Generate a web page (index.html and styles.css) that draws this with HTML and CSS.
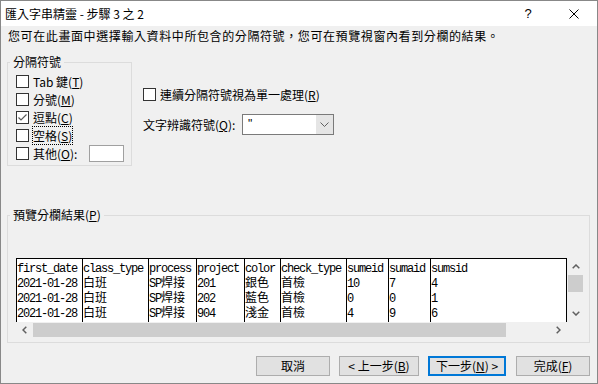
FILE: index.html
```html
<!DOCTYPE html>
<html lang="zh-Hant">
<head>
    <meta charset="UTF-8">
    <title>匯入字串精靈 - 步驟 3 之 2</title>
    <link rel="stylesheet" href="styles.css">
</head>
<body>
<div class="window">
    <div class="titlebar">
        <span class="title">匯入字串精靈 - 步驟 3 之 2</span>
        <span class="tb-btn help">?</span>
        <span class="tb-btn close">
            <svg width="10" height="10" viewBox="0 0 10 10"><path d="M0.5 0.5L9.5 9.5M9.5 0.5L0.5 9.5" stroke="#000" stroke-width="1" fill="none"/></svg>
        </span>
    </div>
    <div class="content">
        <p class="intro">您可在此畫面中選擇輸入資料中所包含的分隔符號，您可在預覽視窗內看到分欄的結果。</p>

        <div class="options">
            <fieldset class="group delims">
                <legend>分隔符號</legend>
                <div class="rows">
                    <div class="check"><span class="box"></span><span>Tab 鍵(<u>T</u>)</span></div>
                    <div class="check"><span class="box"></span><span>分號(<u>M</u>)</span></div>
                    <div class="check"><span class="box"><svg width="11" height="11" viewBox="0 0 11 11"><path d="M1.5 5.5L4 8L9.5 2.5" stroke="#5a5a5a" stroke-width="1.2" fill="none"/></svg></span><span>逗點(<u>C</u>)</span></div>
                    <div class="check"><span class="box"></span><span class="focus">空格(<u>S</u>)</span></div>
                    <div class="check"><span class="box"></span><span>其他(<u>O</u>):</span><span class="other"></span></div>
                </div>
            </fieldset>

            <div class="side">
                <div class="check"><span class="box"></span><span>連續分隔符號視為單一處理(<u>R</u>)</span></div>
                <div class="qualifier">
                    <span class="q-label">文字辨識符號(<u>Q</u>):</span>
                    <div class="combo">
                        <span class="combo-text">"</span>
                        <span class="combo-btn"><svg width="9" height="5" viewBox="0 0 9 5"><path d="M0.5 0.5L4.5 4.5L8.5 0.5" stroke="#606060" stroke-width="1" fill="none"/></svg></span>
                    </div>
                </div>
            </div>
        </div>

        <fieldset class="group preview">
            <legend>預覽分欄結果(<u>P</u>)</legend>
            <div class="preview-body">
                <div class="scroller">
                    <div class="view">
                        <div class="col c10">
                            <div>first_date</div><div>2021-01-28</div><div>2021-01-28</div><div>2021-01-28</div>
                        </div>
                        <div class="col c10">
                            <div>class_type</div><div class="w">白班</div><div class="w">白班</div><div class="w">白班</div>
                        </div>
                        <div class="col c7">
                            <div>process</div><div>SP<span class="w">焊接</span></div><div>SP<span class="w">焊接</span></div><div>SP<span class="w">焊接</span></div>
                        </div>
                        <div class="col c7">
                            <div>project</div><div>201</div><div>202</div><div>904</div>
                        </div>
                        <div class="col c5">
                            <div>color</div><div class="w">銀色</div><div class="w">藍色</div><div class="w">淺金</div>
                        </div>
                        <div class="col c10">
                            <div>check_type</div><div class="w">首檢</div><div class="w">首檢</div><div class="w">首檢</div>
                        </div>
                        <div class="col c6">
                            <div>sumeid</div><div>10</div><div>0</div><div>4</div>
                        </div>
                        <div class="col c6">
                            <div>sumaid</div><div>7</div><div>0</div><div>9</div>
                        </div>
                        <div class="col last">
                            <div>sumsid</div><div>4</div><div>1</div><div>6</div>
                        </div>
                    </div>
                    <div class="vscroll">
                        <span class="arrow"><svg width="8" height="5" viewBox="0 0 8 5"><path d="M0.7 4.3L4 1L7.3 4.3" stroke="#606060" stroke-width="1.5" fill="none"/></svg></span>
                        <span class="vthumb"></span>
                        <span class="spacer"></span>
                        <span class="arrow"><svg width="8" height="5" viewBox="0 0 8 5"><path d="M0.7 0.7L4 4L7.3 0.7" stroke="#606060" stroke-width="1.5" fill="none"/></svg></span>
                    </div>
                    <div class="hscroll">
                        <span class="arrow"><svg width="5" height="8" viewBox="0 0 5 8"><path d="M4.3 0.7L1 4L4.3 7.3" stroke="#606060" stroke-width="1.5" fill="none"/></svg></span>
                        <span class="hthumb"></span>
                        <span class="spacer"></span>
                        <span class="arrow"><svg width="5" height="8" viewBox="0 0 5 8"><path d="M0.7 0.7L4 4L0.7 7.3" stroke="#606060" stroke-width="1.5" fill="none"/></svg></span>
                    </div>
                    <div class="corner"></div>
                </div>
            </div>
        </fieldset>

        <div class="buttons">
            <button class="btn b-cancel">取消</button>
            <button class="btn b-back">&lt; 上一步(<u>B</u>)</button>
            <button class="btn b-next default">下一步(<u>N</u>) &gt;</button>
            <button class="btn b-finish">完成(<u>F</u>)</button>
        </div>
    </div>
</div>
</body>
</html>
```

FILE: styles.css
```css
*{
    margin: 0;
    padding: 0;
    box-sizing: border-box;
}
body{
    background: #fff;
    font-family: "Noto Sans CJK TC", "Liberation Sans", sans-serif;
    font-size: 12px;
    color: #000;
}
u{
    text-decoration: underline;
}
.window{
    width: 598px;
    height: 384px;
    border: 1px solid #888;
    background: #f0f0f0;
    display: flex;
    flex-direction: column;
}

/* title bar */
.titlebar{
    height: 25px;
    background: #fff;
    display: flex;
    align-items: center;
    padding-left: 4px;
}
.title{
    flex: 1;
    line-height: 16px;
}
.tb-btn{
    width: 46px;
    height: 25px;
    display: flex;
    align-items: center;
    justify-content: center;
}
.help{
    font-family: "Liberation Sans", sans-serif;
    font-size: 13px;
}

.content{
    flex: 1;
    padding: 2px 7px 0 6px;
    display: flex;
    flex-direction: column;
}
.intro{
    line-height: 16px;
    padding-left: 1px;
    letter-spacing: 0.6px;
}

/* group boxes */
.group{
    border: 1px solid #dcdcdc;
    min-inline-size: 0;
}
.group legend{
    margin-left: 2px;
    padding: 0 3px;
    line-height: 14px;
}

.options{
    display: flex;
    align-items: flex-start;
    margin-top: 11px;
}
.delims{
    width: 125px;
    height: 111px;
}
.rows{
    padding: 3px 0 0 8px;
}
.check{
    display: flex;
    align-items: center;
    height: 18px;
    gap: 4px;
}
.box{
    width: 13px;
    height: 13px;
    border: 1px solid #333;
    background: #fff;
    display: flex;
    align-items: center;
    justify-content: center;
}
.focus{
    outline: 1px dotted #000;
    outline-offset: 0;
}
.other{
    width: 35px;
    height: 17px;
    margin-left: auto;
    margin-right: 7px;
    background: #fff;
    border: 1px solid #a0a0a0;
}

.side{
    margin-left: 11px;
    padding-top: 30px;
}
.qualifier{
    display: flex;
    align-items: center;
    height: 21px;
    margin-top: 11px;
}
.q-label{
    width: 99px;
}
.combo{
    width: 92px;
    height: 21px;
    border: 1px solid #7a7a7a;
    background: #fff;
    display: flex;
}
.combo-text{
    flex: 1;
    padding-left: 5px;
    line-height: 18px;
    font-family: "Liberation Sans", sans-serif;
}
.combo-btn{
    width: 17px;
    background: #e5e5e5;
    display: flex;
    align-items: center;
    justify-content: center;
}

/* preview */
.preview{
    margin-top: 42px;
    height: 135px;
}
.preview-body{
    padding: 36px 5px 0 8px;
}
.scroller{
    display: grid;
    grid-template-columns: 1fr 17px;
    grid-template-rows: 64px 16px;
}
.view{
    background: #fff;
    border-top: 1px solid #000;
    display: flex;
    overflow: hidden;
    font-family: "Liberation Mono", "Noto Sans CJK TC", monospace;
    font-size: 12px;
    letter-spacing: -1.2px;
}
.col{
    border-left: 1px solid #000;
    padding-top: 3px;
    white-space: nowrap;
}
.col div{
    height: 15px;
    line-height: 15px;
}
.col .w, .col span.w{
    font-size: 12px;
    letter-spacing: 0;
}
.c10{ width: 66px; }
.c7{ width: 48px; }
.c6{ width: 42px; }
.c5{ width: 36px; }
.last{
    flex: 1;
    border-right: 1px solid #000;
}

.vscroll{
    display: flex;
    flex-direction: column;
}
.vscroll .arrow{
    height: 17px;
    display: flex;
    align-items: center;
    justify-content: center;
}
.vthumb{
    height: 17px;
    margin: 0 1px;
    background: #cdcdcd;
}
.spacer{
    flex: 1;
}
.hscroll{
    display: flex;
}
.hscroll .arrow{
    width: 17px;
    display: flex;
    align-items: center;
    justify-content: center;
}
.hthumb{
    width: 473px;
    margin: 1px 0;
    background: #cdcdcd;
}

/* buttons */
.buttons{
    display: flex;
    justify-content: flex-end;
    margin-top: 13px;
}
.btn{
    height: 20px;
    background: #e1e1e1;
    border: 1px solid #adadad;
    font-family: "Noto Sans CJK TC", "Liberation Sans", sans-serif;
    font-size: 12px;
    line-height: 16px;
    color: #000;
}
.default{
    border: 2px solid #0078d7;
}
.b-cancel{ width: 74px; }
.b-back{ width: 80px; margin-left: 9px; }
.b-next{ width: 78px; margin-left: 9px; }
.b-finish{ width: 74px; margin-left: 10px; }
```
